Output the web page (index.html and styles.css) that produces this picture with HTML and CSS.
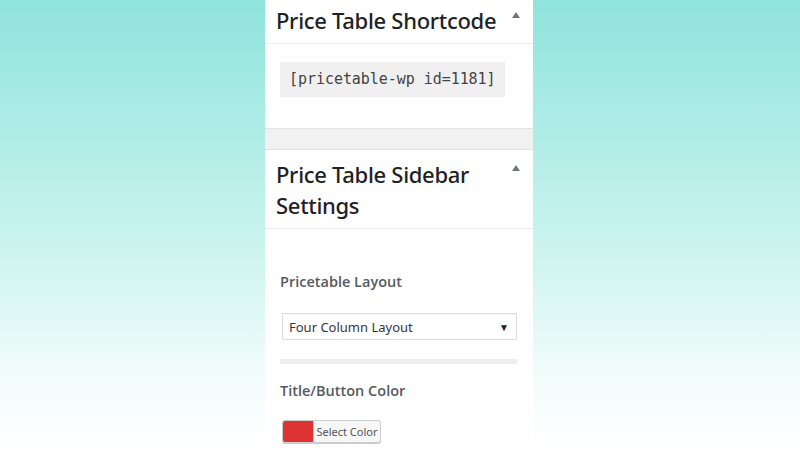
FILE: index.html
```html
<!DOCTYPE html>
<html>
<head>
<meta charset="utf-8">
<link rel="stylesheet" href="styles.css">
</head>
<body>
<div class="page">
  <div class="column">
    <section class="box box-short">
      <header class="box-head head-one">
        <h2 class="box-title">Price Table Shortcode</h2>
        <span class="toggle"></span>
      </header>
      <div class="box-body body-one">
        <code class="shortcode">[pricetable-wp id=1181]</code>
      </div>
    </section>
    <div class="gap"></div>
    <section class="box">
      <header class="box-head head-two">
        <h2 class="box-title">Price Table Sidebar Settings</h2>
        <span class="toggle"></span>
      </header>
      <div class="box-body body-two">
        <div class="label">Pricetable Layout</div>
        <div class="select">
          <span class="select-text">Four Column Layout</span>
          <span class="select-arrow">▼</span>
        </div>
        <div class="divider"></div>
        <div class="label label-color">Title/Button Color</div>
        <div class="color-btn">
          <span class="swatch"></span>
          <span class="color-text">Select Color</span>
        </div>
      </div>
    </section>
  </div>
</div>
</body>
</html>
```

FILE: styles.css
```css
html, body {
  margin: 0;
  padding: 0;
}
body {
  width: 800px;
  height: 453px;
  overflow: hidden;
  background: linear-gradient(180deg, #8fe4dd 0%, #c6f2ed 50%, #f4fdfc 85%, #ffffff 100%);
  font-family: "Noto Sans", "Open Sans", sans-serif;
}
.page {
  display: flex;
  padding-left: 265px;
}
.column {
  width: 268px;
  height: 453px;
  background: #ffffff;
  display: flex;
  flex-direction: column;
}
.box {
  background: #fff;
}
.box-head {
  position: relative;
  border-bottom: 1px solid #eeeeee;
  padding-left: 11px;
  padding-right: 40px;
  box-sizing: border-box;
}
.head-one {
  height: 44px;
  padding-top: 5px;
  padding-right: 20px;
  white-space: nowrap;
}
.head-two {
  height: 79px;
  padding-top: 9px;
}
.box-title {
  margin: 0;
  font-weight: 500;
  font-size: 22px;
  line-height: 31px;
  color: #1e2226;
  letter-spacing: -0.3px;
}
.toggle {
  position: absolute;
  right: 13px;
  top: 12px;
  width: 0;
  height: 0;
  border-left: 4px solid transparent;
  border-right: 4px solid transparent;
  border-bottom: 6px solid #72777c;
}
.head-two .toggle {
  top: 15px;
}
.body-one {
  height: 84px;
  padding: 18px 0 0 15px;
  box-sizing: border-box;
}
.shortcode {
  display: inline-block;
  background: #f0f0f0;
  font-family: "DejaVu Sans Mono", "Liberation Mono", monospace;
  font-size: 15px;
  line-height: 35px;
  height: 35px;
  padding: 0 9px;
  color: #444;
  letter-spacing: -0.05px;
}
.gap {
  background: #f1f1f1;
  border-top: 1px solid #e2e2e2;
  border-bottom: 1px solid #e2e2e2;
  box-sizing: border-box;
  height: 22px;
}
.body-two {
  padding: 42px 16px 0 15px;
}
.label {
  font-family: "Open Sans", "Noto Sans", sans-serif;
  font-size: 14.5px;
  font-weight: 600;
  color: #555a60;
  line-height: 22px;
}
.select {
  margin: 20px 0 0 2px;
  height: 27px;
  border: 1px solid #dddddd;
  box-sizing: border-box;
  display: flex;
  align-items: center;
  justify-content: space-between;
  padding: 0 7px 0 6px;
  box-shadow: inset 0 1px 2px rgba(0,0,0,0.04);
}
.select-text {
  font-size: 13px;
  color: #32373c;
}
.select-arrow {
  font-size: 10px;
  color: #222;
}
.divider {
  margin-top: 19px;
  height: 5px;
  background: #eeeeee;
}
.label-color {
  margin-top: 16px;
}
.color-btn {
  margin: 18px 0 0 2px;
  width: 99px;
  height: 23px;
  border: 1px solid #cccccc;
  border-radius: 3px;
  box-sizing: border-box;
  display: flex;
  overflow: hidden;
  background: #f7f7f7;
  box-shadow: 0 1px 0 #cccccc;
}
.swatch {
  width: 30px;
  background: #dd3333;
}
.color-text {
  flex: 1;
  font-size: 11px;
  line-height: 21px;
  color: #555;
  text-align: center;
  border-left: 1px solid #ccc;
}
```
